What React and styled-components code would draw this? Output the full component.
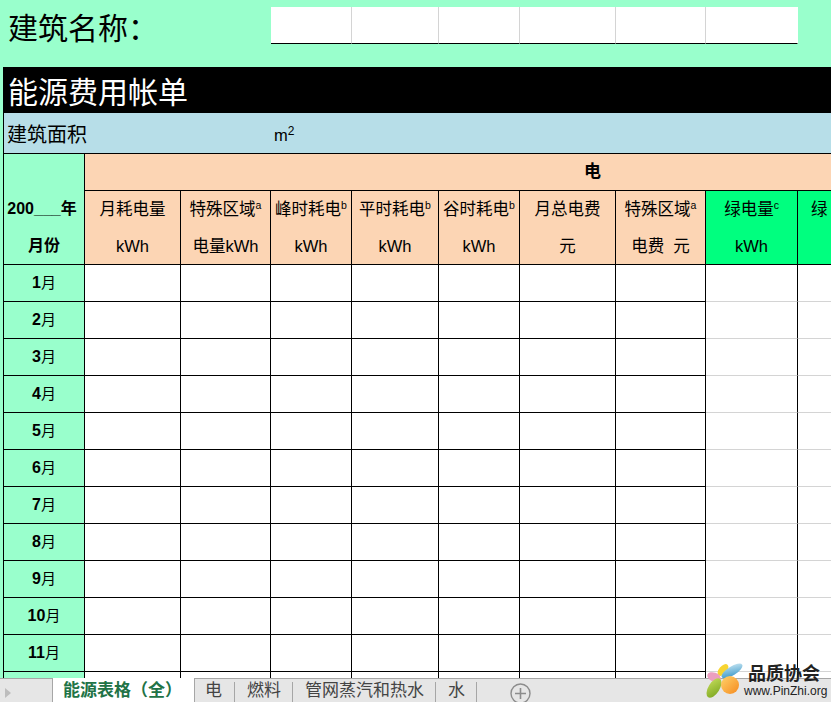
import React from 'react';
import styled, { createGlobalStyle } from 'styled-components';

const COLUMNS = '81px 96px 90px 81px 87px 81px 96px 90px 92px 92px 211px';
const MINT = '#99ffcc';
const PEACH = '#fcd5b4';
const CJK = '"Liberation Sans", "Noto Sans CJK SC", sans-serif';

const GlobalStyle = createGlobalStyle`
    html, body {
        margin: 0;
        padding: 0;
        overflow: hidden;
    }
    body {
        font-family: ${CJK};
        color: #000;
    }
`;

const Page = styled.div`
    position: relative;
    height: 100vh;
    display: flex;
    flex-direction: column;
    overflow: hidden;
`;

const Sheet = styled.div`
    flex: 1;
    min-height: 0;
    overflow: hidden;
    background-color: ${MINT};
    padding-left: 3px;
`;

const NameRow = styled.div`
    display: grid;
    grid-template-columns: ${COLUMNS};
    width: 1108px;
    height: 67px;
    margin-left: 1px;
`;

const BuildingName = styled.div`
    grid-column: 1 / 4;
    font-size: 30px;
    line-height: 57px;
    padding-left: 4px;
`;

const NameField = styled.div`
    box-sizing: border-box;
    height: 37px;
    margin-top: 7px;
    background-color: #fff;
    border-bottom: 1px solid #000;
    border-right: 1px solid ${(p) => (p.$last ? '#fff' : '#d4d4d4')};
`;

const TitleBar = styled.div`
    width: 1108px;
    height: 46px;
    background-color: #000;
    color: #fff;
    font-size: 30px;
    line-height: 52px;
    padding-left: 5px;
    box-sizing: border-box;
`;

const AreaRow = styled.div`
    display: grid;
    grid-template-columns: ${COLUMNS};
    width: 1108px;
    height: 40px;
    box-sizing: content-box;
    background-color: #b7dee8;
    border-left: 1px solid #000;
    border-bottom: 1px solid #000;
    font-size: 20px;
    line-height: 44px;
`;

const AreaLabel = styled.div`
    grid-column: 1 / 4;
    padding-left: 3px;
`;

const AreaUnit = styled.div`
    padding-left: 3px;
    font-size: 16.5px;
`;

const Table = styled.div`
    display: grid;
    grid-template-columns: ${COLUMNS};
    grid-auto-rows: 37px;
    width: 1108px;
    background-color: #fff;
    border-left: 1px solid #000;
`;

const Cell = styled.div`
    box-sizing: border-box;
    border-right: 1px solid #000;
    border-bottom: 1px solid #000;
`;

const Corner = styled(Cell)`
    grid-row: 1 / 4;
    background-color: ${MINT};
    display: flex;
    flex-direction: column;
    justify-content: flex-end;
    font-weight: 700;
    font-size: 16px;
    line-height: 37px;
    text-align: center;
    white-space: nowrap;
`;

const YearLine = styled.div`
    padding-right: 4px;
`;

const GroupHead = styled(Cell)`
    grid-column: 2 / -1;
    background-color: ${PEACH};
    font-size: 17px;
    font-weight: 700;
    line-height: 36px;
    text-align: center;
`;

const HeadCell = styled(Cell)`
    grid-row: span 2;
    background-color: ${(p) => (p.$green ? '#00ff7f' : PEACH)};
    font-size: 16.5px;
    line-height: 37px;
    letter-spacing: ${(p) => (p.$spaced ? '3.5px' : '0')};
    text-align: center;
    white-space: pre;
    overflow: hidden;
`;

const Unit = styled.div`
    letter-spacing: 0;
`;

const Sup = styled.sup`
    font-size: ${(p) => (p.$big ? '12px' : '10.5px')};
    line-height: 0;
    letter-spacing: 0;
`;

const MonthCell = styled(Cell)`
    background-color: ${MINT};
    font-size: 16px;
    font-weight: 700;
    line-height: 36px;
    text-align: center;

    span {
        font-size: 15px;
        font-weight: 400;
    }
`;

const DataCell = styled(Cell)`
    border-bottom-color: ${(p) => (p.$light ? '#d4d4d4' : '#000')};
`;

const EmptyHead = styled.div`
    grid-row: span 2;
`;

const TabBar = styled.div`
    flex: none;
    box-sizing: border-box;
    height: 24px;
    display: flex;
    align-items: flex-start;
    background-color: #e6e6e6;
    border-top: 1px solid #a6a6a6;
    font-family: "Noto Sans CJK SC", sans-serif;
    font-size: 17px;
    color: #444;
`;

const TabNav = styled.div`
    width: 52px;
    height: 23px;
    display: flex;
    align-items: center;
    padding-left: 5px;
    box-sizing: border-box;

    svg {
        margin-top: 5px;
    }
`;

const ActiveTab = styled.div`
    box-sizing: border-box;
    width: 143px;
    height: 24px;
    margin-top: -1px;
    padding-left: 10px;
    background-color: #fff;
    border: solid #a6a6a6;
    border-width: 0 1px;
    color: #217346;
    font-weight: 700;
    line-height: 21px;
    white-space: nowrap;
`;

const Tab = styled.div`
    box-sizing: border-box;
    height: 20px;
    margin-top: 3px;
    padding: ${(p) => (p.$first ? '0 12px 0 10px' : '0 11px 0 12px')};
    border-right: 1px solid #a6a6a6;
    line-height: 13px;
    white-space: nowrap;
`;

const AddTab = styled.svg`
    width: 21px;
    height: 21px;
    margin: 4px 0 0 33px;
    flex: none;
`;

const Logo = styled.div`
    position: absolute;
    left: 704px;
    top: 660px;
    display: flex;
`;

const LogoText = styled.div`
    display: flex;
    flex-direction: column;
`;

const LogoName = styled.div`
    padding-left: 4px;
    font-family: "Noto Sans CJK SC", sans-serif;
    font-size: 18px;
    font-weight: 700;
    line-height: 24px;
    color: #222;
`;

const LogoUrl = styled.div`
    font-family: "Liberation Sans", sans-serif;
    font-size: 12px;
    line-height: 14px;
    color: #222;
`;

const fields = [0, 1, 2, 3, 4, 5];
const heads = [
    { top: '月耗电量', bottom: 'kWh' },
    { top: '特殊区域', sup: 'a', bottom: '电量kWh' },
    { top: '峰时耗电', sup: 'b', bottom: 'kWh' },
    { top: '平时耗电', sup: 'b', bottom: 'kWh' },
    { top: '谷时耗电', sup: 'b', bottom: 'kWh' },
    { top: '月总电费', bottom: '元' },
    { top: '特殊区域', sup: 'a', bottom: '电费  元' },
    { top: '绿电量', sup: 'c', bottom: 'kWh', green: true },
    { top: '绿电费', sup: 'c', bottom: '元', green: true, spaced: true },
];
const months = [1, 2, 3, 4, 5, 6, 7, 8, 9, 10, 11, 12];
const dataCols = [0, 1, 2, 3, 4, 5, 6, 7, 8];

const LogoMark = () => (
    <svg width="40" height="42" viewBox="0 0 40 42">
        <defs>
            <linearGradient id="orange" x1="0" y1="0" x2="1" y2="1">
                <stop offset="0" stopColor="#ffd36b" />
                <stop offset="1" stopColor="#f58a1f" />
            </linearGradient>
            <linearGradient id="blue" x1="0" y1="1" x2="1" y2="0">
                <stop offset="0" stopColor="#2a8fc4" />
                <stop offset="1" stopColor="#cfeaf5" />
            </linearGradient>
            <linearGradient id="green" x1="0" y1="1" x2="1" y2="0">
                <stop offset="0" stopColor="#7aa51f" />
                <stop offset="1" stopColor="#c4dc5a" />
            </linearGradient>
        </defs>
        <ellipse cx="19" cy="10" rx="7" ry="4" fill="#f7d431" transform="rotate(-50 19 10)" />
        <ellipse cx="28" cy="11" rx="12" ry="4.5" fill="url(#blue)" transform="rotate(-32 28 11)" />
        <ellipse cx="10" cy="17" rx="7" ry="4.5" fill="#eb9fc0" transform="rotate(20 10 17)" />
        <ellipse cx="10" cy="28" rx="11" ry="5.5" fill="url(#green)" transform="rotate(-58 10 28)" />
        <circle cx="26" cy="25" r="9" fill="url(#orange)" />
    </svg>
);

const App = () => {
    return (
        <Page>
            <GlobalStyle />
            <Sheet>
                <NameRow>
                    <BuildingName>建筑名称：</BuildingName>
                    {fields.map((f) => (
                        <NameField key={f} $last={f === 5} />
                    ))}
                </NameRow>
                <TitleBar>能源费用帐单</TitleBar>
                <AreaRow>
                    <AreaLabel>建筑面积</AreaLabel>
                    <AreaUnit>
                        m<Sup $big>2</Sup>
                    </AreaUnit>
                </AreaRow>
                <Table>
                    <Corner>
                        <YearLine>200___年</YearLine>
                        <div>月份</div>
                    </Corner>
                    <GroupHead>电</GroupHead>
                    {heads.map((h, i) => (
                        <HeadCell key={i} $green={h.green} $spaced={h.spaced}>
                            <div>
                                {h.top}
                                {h.sup && <Sup>{h.sup}</Sup>}
                            </div>
                            <Unit>{h.bottom}</Unit>
                        </HeadCell>
                    ))}
                    <EmptyHead />
                    {months.map((m) => (
                        <React.Fragment key={m}>
                            <MonthCell>
                                {m}
                                <span>月</span>
                            </MonthCell>
                            {dataCols.map((c) => (
                                <DataCell key={c} $light={c > 6} />
                            ))}
                            <DataCell $light />
                        </React.Fragment>
                    ))}
                </Table>
            </Sheet>
            <TabBar>
                <TabNav>
                    <svg width="6" height="10" viewBox="0 0 6 10">
                        <path d="M0 0 L6 5 L0 10 Z" fill="#bdbdbd" />
                    </svg>
                </TabNav>
                <ActiveTab>能源表格（全）</ActiveTab>
                <Tab $first>电</Tab>
                <Tab>燃料</Tab>
                <Tab>管网蒸汽和热水</Tab>
                <Tab>水</Tab>
                <AddTab viewBox="0 0 21 21">
                    <circle cx="10.5" cy="10.5" r="9.5" fill="none" stroke="#8c8c8c" strokeWidth="1.4" />
                    <path d="M10.5 5 V16 M5 10.5 H16" stroke="#8c8c8c" strokeWidth="1.6" />
                </AddTab>
            </TabBar>
            <Logo>
                <LogoMark />
                <LogoText>
                    <LogoName>品质协会</LogoName>
                    <LogoUrl>www.PinZhi.org</LogoUrl>
                </LogoText>
            </Logo>
        </Page>
    );
};

export default App;
